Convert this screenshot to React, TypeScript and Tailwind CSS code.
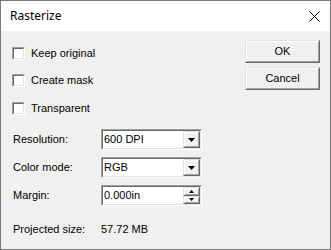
import React from 'react';

const body = { fontFamily: '"Liberation Sans", Arial, sans-serif' };

// sunken 3D frame used by checkboxes and fields
const Sunken: React.FC<{ className?: string; children?: React.ReactNode }> = ({ className = '', children }) => (
  <div className={`border border-t-[#a0a0a0] border-l-[#a0a0a0] border-b-white border-r-white ${className}`}>
    <div className="w-full h-full border border-t-[#696969] border-l-[#696969] border-b-[#e3e3e3] border-r-[#e3e3e3] bg-white flex items-center">
      {children}
    </div>
  </div>
);

// raised 3D frame for push buttons
const Raised: React.FC<{ className?: string; children?: React.ReactNode }> = ({ className = '', children }) => (
  <div className={`border border-t-[#e3e3e3] border-l-[#e3e3e3] border-b-[#696969] border-r-[#696969] bg-[#f0f0f0] ${className}`}>
    <div className="w-full h-full border border-t-white border-l-white border-b-[#a0a0a0] border-r-[#a0a0a0] flex items-center justify-center">
      {children}
    </div>
  </div>
);

const Check: React.FC<{ label: string; className?: string }> = ({ label, className = '' }) => (
  <div className={`flex items-center h-[13px] ${className}`}>
    <Sunken className="w-[13px] h-[13px]" />
    <span className="ml-[6px] text-[11px] text-black leading-none">{label}</span>
  </div>
);

const Down = () => (
  <svg width="7" height="4" viewBox="0 0 7 4">
    <polygon points="0,0 7,0 3.5,4" fill="#000" />
  </svg>
);

const Select: React.FC<{ value: string }> = ({ value }) => (
  <Sunken className="w-[101px] h-[21px]">
    <span className="flex-1 pl-[1px] text-[11px] leading-none">{value}</span>
    <Raised className="w-[17px] h-full">
      <Down />
    </Raised>
  </Sunken>
);

const Spin: React.FC<{ value: string }> = ({ value }) => (
  <Sunken className="w-[101px] h-[21px]">
    <span className="flex-1 pl-[1px] text-[11px] leading-none">{value}</span>
    <div className="w-[17px] h-full flex flex-col">
      <Raised className="w-full flex-1">
        <svg width="5" height="3" viewBox="0 0 5 3">
          <polygon points="2.5,0 5,3 0,3" fill="#000" />
        </svg>
      </Raised>
      <Raised className="w-full flex-1">
        <svg width="5" height="3" viewBox="0 0 5 3">
          <polygon points="0,0 5,0 2.5,3" fill="#000" />
        </svg>
      </Raised>
    </div>
  </Sunken>
);

const Row: React.FC<{ label: string; className?: string; children: React.ReactNode }> = ({ label, className = '', children }) => (
  <div className={`flex items-center ${className}`}>
    <span className="w-[89px] pl-[1px] text-[11px] leading-none">{label}</span>
    {children}
  </div>
);

export default function App() {
  return (
    <div className="w-[331px] h-[250px] border border-[#7a7a7a] flex flex-col overflow-hidden">
      <div className="h-[30px] bg-white flex items-center justify-between pl-[9px] pr-[10px]">
        <span className="text-[12px] text-black" style={{ fontFamily: '"Noto Sans", "Open Sans", sans-serif' }}>
          Rasterize
        </span>
        <svg width="11" height="11" viewBox="0 0 11 11">
          <path d="M0.5 0.5 L10.5 10.5 M10.5 0.5 L0.5 10.5" stroke="#000" strokeWidth="1" />
        </svg>
      </div>
      <div className="flex-1 bg-[#f0f0f0] flex justify-between text-black" style={body}>
        <div className="flex flex-col pl-[11px] pt-[16px]">
          <Check label="Keep original" />
          <Check label="Create mask" className="mt-[14px]" />
          <Check label="Transparent" className="mt-[15px]" />
          <Row label="Resolution:" className="mt-[14px]">
            <Select value="600 DPI" />
          </Row>
          <Row label="Color mode:" className="mt-[7px]">
            <Select value="RGB" />
          </Row>
          <Row label="Margin:" className="mt-[7px]">
            <Spin value="0.000in" />
          </Row>
          <Row label="Projected size:" className="mt-[18px]">
            <span className="text-[11px] leading-none">57.72 MB</span>
          </Row>
        </div>
        <div className="flex flex-col pt-[9px] pr-[10px] gap-[4px]">
          <Raised className="w-[75px] h-[23px]">
            <span className="text-[11px] leading-none">OK</span>
          </Raised>
          <Raised className="w-[75px] h-[23px]">
            <span className="text-[11px] leading-none">Cancel</span>
          </Raised>
        </div>
      </div>
    </div>
  );
}
